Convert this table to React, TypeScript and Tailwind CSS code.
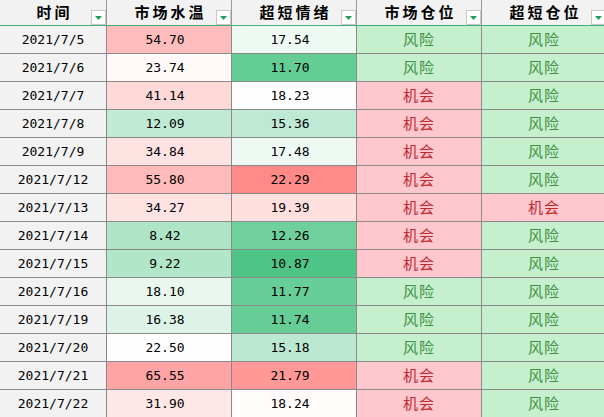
import React from "react";

type Row = {
  date: string;
  a: string;
  aBg: string;
  b: string;
  bBg: string;
  c: string;
  d: string;
};

const rows: Row[] = [
  { date: "2021/7/5", a: "54.70", aBg: "bg-[#ffbcbc]", b: "17.54", bBg: "bg-[#eef9f3]", c: "风险", d: "风险" },
  { date: "2021/7/6", a: "23.74", aBg: "bg-[#fffaf9]", b: "11.70", bBg: "bg-[#63cd94]", c: "风险", d: "风险" },
  { date: "2021/7/7", a: "41.14", aBg: "bg-[#ffd8d8]", b: "18.23", bBg: "bg-[#fffefe]", c: "机会", d: "风险" },
  { date: "2021/7/8", a: "12.09", aBg: "bg-[#c1ead5]", b: "15.36", bBg: "bg-[#bfe9d4]", c: "机会", d: "风险" },
  { date: "2021/7/9", a: "34.84", aBg: "bg-[#ffe3e3]", b: "17.48", bBg: "bg-[#eff9f4]", c: "机会", d: "风险" },
  { date: "2021/7/12", a: "55.80", aBg: "bg-[#ffbaba]", b: "22.29", bBg: "bg-[#ff8a88]", c: "机会", d: "风险" },
  { date: "2021/7/13", a: "34.27", aBg: "bg-[#ffe3e3]", b: "19.39", bBg: "bg-[#ffe0df]", c: "机会", d: "机会" },
  { date: "2021/7/14", a: "8.42", aBg: "bg-[#ade5c6]", b: "12.26", bBg: "bg-[#6fd09b]", c: "机会", d: "风险" },
  { date: "2021/7/15", a: "9.22", aBg: "bg-[#b1e6c9]", b: "10.87", bBg: "bg-[#4ec586]", c: "机会", d: "风险" },
  { date: "2021/7/16", a: "18.10", aBg: "bg-[#e9f7ef]", b: "11.77", bBg: "bg-[#66ce96]", c: "风险", d: "风险" },
  { date: "2021/7/19", a: "16.38", aBg: "bg-[#def3e8]", b: "11.74", bBg: "bg-[#65cd95]", c: "风险", d: "风险" },
  { date: "2021/7/20", a: "22.50", aBg: "bg-[#fffefe]", b: "15.18", bBg: "bg-[#bce8d2]", c: "风险", d: "风险" },
  { date: "2021/7/21", a: "65.55", aBg: "bg-[#ffa4a4]", b: "21.79", bBg: "bg-[#ff9897]", c: "机会", d: "风险" },
  { date: "2021/7/22", a: "31.90", aBg: "bg-[#ffe7e7]", b: "18.24", bBg: "bg-[#fffcfb]", c: "机会", d: "风险" },
];

const headers = ["时间", "市场水温", "超短情绪", "市场仓位", "超短仓位"];

const mono = "font-['DejaVu_Sans_Mono','Noto_Sans_CJK_SC',monospace]";
const cjk = "font-['Noto_Sans_CJK_SC',sans-serif]";

function FilterButton() {
  return (
    <div className="absolute right-0 bottom-0 w-[15px] h-[15px] bg-white border border-[#c8c8c8] flex items-center justify-center">
      <svg width="7" height="4" viewBox="0 0 7 4">
        <polygon points="0,0 7,0 3.5,4" fill="#1f9d5b" />
      </svg>
    </div>
  );
}

function Signal({ v }: { v: string }) {
  const risk = v === "风险";
  return (
    <div
      className={`h-[28px] border-r border-b border-[#8a8a8a] flex items-center justify-center text-[15px] tracking-[1px] ${cjk} ${
        risk ? "bg-[#c6efce] text-[#3f8f3f]" : "bg-[#ffc7ce] text-[#c0282e]"
      }`}
    >
      {v}
    </div>
  );
}

export default function App() {
  return (
    <div className="w-[604px] h-[417px] overflow-hidden bg-white">
      <div className="grid w-[607px] grid-cols-[107px_125px_125px_125px_125px]">
        {headers.map((h) => (
          <div
            key={h}
            className="relative h-[26px] bg-[#f2f2f2] border-r border-r-[#9a9a9a] border-b border-b-[#3fae78] flex items-center justify-center"
          >
            <span className={`text-[15px] font-bold tracking-[3px] pl-[3px] text-black ${cjk}`}>{h}</span>
            <FilterButton />
          </div>
        ))}
        {rows.map((r) => (
          <React.Fragment key={r.date}>
            <div
              className={`h-[28px] bg-[#f2f2f2] border-r border-b border-[#8a8a8a] flex items-center justify-center text-[13px] text-black ${mono}`}
            >
              {r.date}
            </div>
            <div
              className={`h-[28px] ${r.aBg} border-r border-b border-[#8a8a8a] flex items-center justify-center pr-[8px] text-[13px] text-black ${mono}`}
            >
              {r.a}
            </div>
            <div
              className={`h-[28px] ${r.bBg} border-r border-b border-[#8a8a8a] flex items-center justify-center pr-[8px] text-[13px] text-black ${mono}`}
            >
              {r.b}
            </div>
            <Signal v={r.c} />
            <Signal v={r.d} />
          </React.Fragment>
        ))}
      </div>
    </div>
  );
}
